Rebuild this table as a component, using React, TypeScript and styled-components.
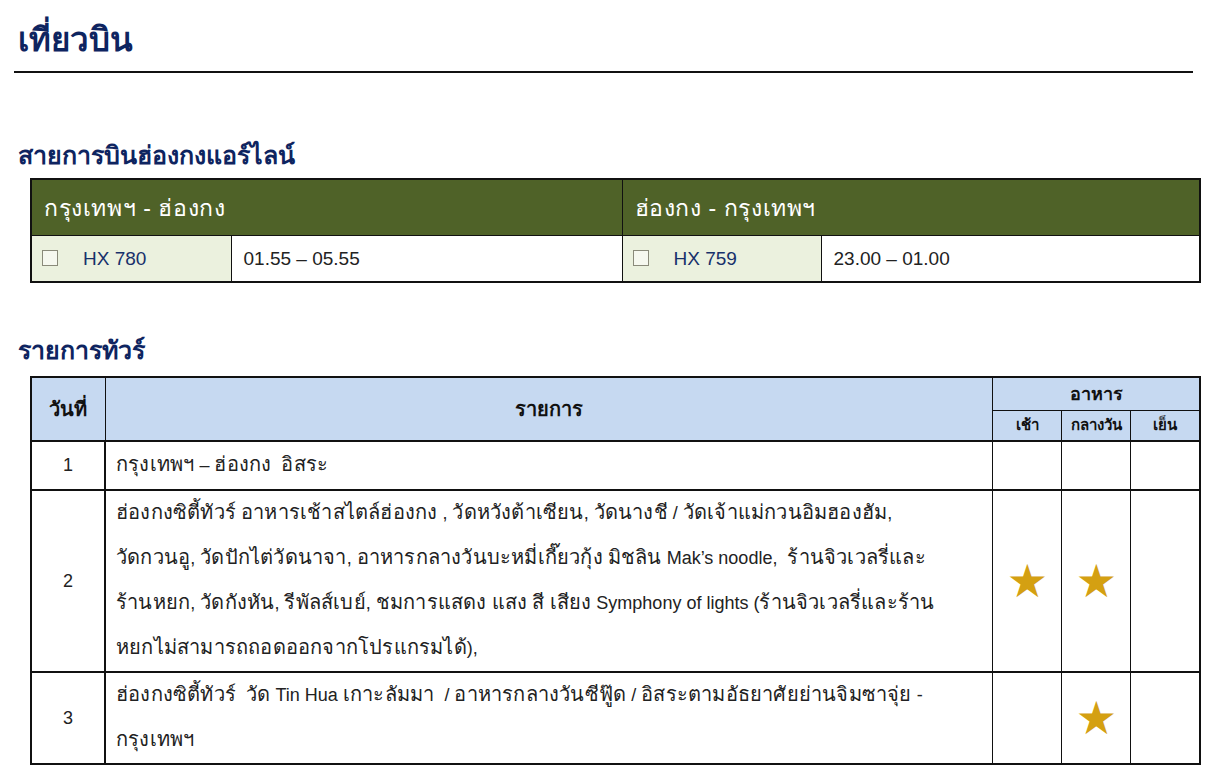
import React from 'react';
import styled, { createGlobalStyle } from 'styled-components';

const GlobalStyle = createGlobalStyle`
  body {
    margin: 0;
    background: #ffffff;
    font-family: "Liberation Sans", Arial, sans-serif;
    color: #222222;
  }
`;

const Page = styled.div`
  width: 1220px;
  padding: 18px 0 0 0;
  box-sizing: border-box;
`;

const PageTitle = styled.h1`
  margin: 0 27px 0 14px;
  padding: 0 0 9px 4px;
  font-size: 33px;
  line-height: 44px;
  font-weight: 700;
  color: #0e2460;
  border-bottom: 2px solid #111111;
`;

const SectionTitle = styled.h2<{ $top: number }>`
  margin: ${(p) => p.$top}px 0 0 18px;
  font-size: 25px;
  line-height: 34px;
  font-weight: 700;
  color: #0e2460;
`;

const Table = styled.table<{ $gap: number }>`
  margin: ${(p) => p.$gap}px 0 0 30px;
  width: 1171px;
  border-collapse: collapse;
  table-layout: fixed;
  border: 2px solid #111111;
`;

const FlightHead = styled.th`
  background: #4f6228;
  color: #ffffff;
  font-weight: 400;
  font-size: 23px;
  letter-spacing: 0.6px;
  text-align: left;
  height: 55px;
  padding: 0 12px;
  border: 1px solid #111111;
`;

const FlightNo = styled.td`
  background: #ebf1de;
  height: 45px;
  padding: 0 12px;
  border: 1px solid #111111;
  font-size: 19px;
  color: #17306b;
`;

const FlightTime = styled.td`
  height: 45px;
  padding: 0 12px;
  border: 1px solid #111111;
  font-size: 19px;
  color: #222222;
`;

const Box = styled.span`
  display: inline-block;
  width: 14px;
  height: 14px;
  border: 1px solid #8a8a7a;
  background: #f6f8ef;
  vertical-align: -1px;
  margin: 0 25px 0 -2px;
`;

const HeadCell = styled.th<{ $size?: number; $bottom?: boolean }>`
  background: #c6d9f1;
  font-weight: 700;
  font-size: ${(p) => p.$size ?? 20}px;
  color: #111111;
  text-align: center;
  padding: 0;
  border: 1px solid #111111;
  border-bottom: ${(p) => (p.$bottom ? '2px' : '1px')} solid #111111;
`;

const DayCell = styled.td`
  text-align: center;
  font-size: 18px;
  border: 1px solid #111111;
  border-right: 2px solid #111111;
  border-top: 2px solid #111111;
  padding: 0;
`;

const DetailCell = styled.td<{ $pad: number }>`
  font-size: 18px;
  line-height: 45px;
  padding: ${(p) => p.$pad}px 10px ${(p) => p.$pad}px 10px;
  border: 1px solid #111111;
  border-top: 2px solid #111111;
  vertical-align: middle;
`;

const Line = styled.div`
  white-space: pre;
  height: 45px;
`;

const Thai = styled.span`
  font-size: 20px;
  line-height: 1;
  letter-spacing: 0.2px;
`;

const MealCell = styled.td`
  text-align: center;
  border: 1px solid #111111;
  border-top: 2px solid #111111;
  padding: 0;
  vertical-align: middle;
`;

const Star = styled.span`
  color: #d4a012;
  font-size: 46px;
  line-height: 1;
  font-family: "DejaVu Sans", sans-serif;
`;

const flights = [
  { head: 'กรุงเทพฯ - ฮ่องกง', no: 'HX 780', time: '01.55 – 05.55' },
  { head: 'ฮ่องกง - กรุงเทพฯ', no: 'HX 759', time: '23.00 – 01.00' },
];

const days = [
  {
    day: '1',
    pad: 1,
    lines: ['กรุงเทพฯ – ฮ่องกง  อิสระ'],
    meals: [false, false, false],
  },
  {
    day: '2',
    pad: 0,
    lines: [
      'ฮ่องกงซิตี้ทัวร์ อาหารเช้าสไตล์ฮ่องกง , วัดหวังต้าเซียน, วัดนางชี / วัดเจ้าแม่กวนอิมฮองฮัม,',
      'วัดกวนอู, วัดปักไต่วัดนาจา, อาหารกลางวันบะหมี่เกี๊ยวกุ้ง มิชลิน Mak’s noodle,  ร้านจิวเวลรี่และ',
      'ร้านหยก, วัดกังหัน, รีพัลส์เบย์, ชมการแสดง แสง สี เสียง Symphony of lights (ร้านจิวเวลรี่และร้าน',
      'หยกไม่สามารถถอดออกจากโปรแกรมได้),',
    ],
    meals: [true, true, false],
  },
  {
    day: '3',
    pad: 0,
    lines: [
      'ฮ่องกงซิตี้ทัวร์  วัด Tin Hua เกาะลัมมา  / อาหารกลางวันซีฟู๊ด / อิสระตามอัธยาศัยย่านจิมซาจุ่ย -',
      'กรุงเทพฯ',
    ],
    meals: [false, true, false],
  },
];

// Thai runs get their own size so the line lengths follow the original layout
function renderMixed(text: string) {
  return text.split(/([\u0E00-\u0E7F]+)/).map((part, i) =>
    /[\u0E00-\u0E7F]/.test(part) ? <Thai key={i}>{part}</Thai> : part
  );
}

export default function App() {
  return (
    <Page>
      <GlobalStyle />
      <PageTitle>เที่ยวบิน</PageTitle>

      <SectionTitle $top={65}>สายการบินฮ่องกงแอร์ไลน์</SectionTitle>
      <Table $gap={6}>
        <colgroup>
          <col style={{ width: 200 }} />
          <col style={{ width: 391 }} />
          <col style={{ width: 199 }} />
          <col />
        </colgroup>
        <thead>
          <tr>
            {flights.map((f) => (
              <FlightHead key={f.head} colSpan={2}>
                {f.head}
              </FlightHead>
            ))}
          </tr>
        </thead>
        <tbody>
          <tr>
            {flights.map((f) => (
              <React.Fragment key={f.no}>
                <FlightNo>
                  <Box />
                  {f.no}
                </FlightNo>
                <FlightTime>{f.time}</FlightTime>
              </React.Fragment>
            ))}
          </tr>
        </tbody>
      </Table>

      <SectionTitle $top={50}>รายการทัวร์</SectionTitle>
      <Table $gap={9}>
        <colgroup>
          <col style={{ width: 74 }} />
          <col />
          <col style={{ width: 69 }} />
          <col style={{ width: 69 }} />
          <col style={{ width: 69 }} />
        </colgroup>
        <thead>
          <tr style={{ height: 33 }}>
            <HeadCell rowSpan={2} $bottom>
              วันที่
            </HeadCell>
            <HeadCell rowSpan={2} $bottom>
              รายการ
            </HeadCell>
            <HeadCell colSpan={3} $size={18}>
              อาหาร
            </HeadCell>
          </tr>
          <tr style={{ height: 31 }}>
            <HeadCell $size={15} $bottom>เช้า</HeadCell>
            <HeadCell $size={15} $bottom>กลางวัน</HeadCell>
            <HeadCell $size={15} $bottom>เย็น</HeadCell>
          </tr>
        </thead>
        <tbody>
          {days.map((d) => (
            <tr key={d.day}>
              <DayCell>{d.day}</DayCell>
              <DetailCell $pad={d.pad}>
                {d.lines.map((l, i) => (
                  <Line key={i}>{renderMixed(l)}</Line>
                ))}
              </DetailCell>
              {d.meals.map((m, i) => (
                <MealCell key={i}>{m ? <Star>★</Star> : null}</MealCell>
              ))}
            </tr>
          ))}
        </tbody>
      </Table>
    </Page>
  );
}
